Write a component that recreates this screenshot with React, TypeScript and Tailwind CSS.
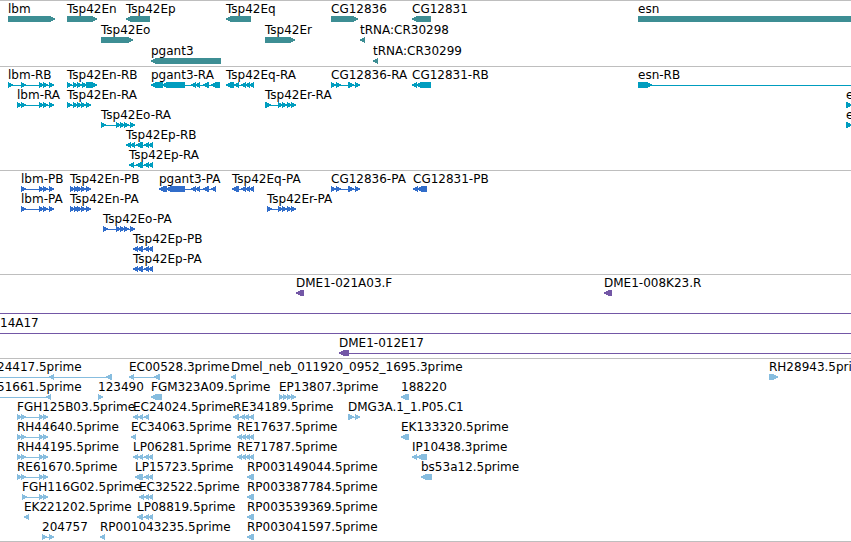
import React from "react";

type Span = [number, number];

type Feature = {
  name?: string;
  strand: "+" | "-";
  spans: Span[];
  // where the label and the connector begin, when not at the first span
  labelAt?: number;
  from?: number;
  to?: number;
};

type TrackData = {
  id: string;
  color: string;
  rowClass: string;
  rows: Feature[][];
};

// features that run on past the right edge of the view
const OFF_RIGHT = 4000;
const HEAD = 5;

const fwd = (name: string, ...spans: Span[]): Feature => ({
  name,
  strand: "+",
  spans,
});
const rev = (name: string, ...spans: Span[]): Feature => ({
  name,
  strand: "-",
  spans,
});

const lbmTail: Span[] = [[39, 44], [43, 48], [49, 54]];
const enTail: Span[] = [[77, 82], [81, 86], [86, 91]];
const eoTail: Span[] = [[116, 121], [120, 125], [124, 129], [130, 135]];
const epTail: Span[] = [[144, 149], [148, 153]];
const eqTail: Span[] = [[241, 246], [245, 250], [249, 254]];
const erTail: Span[] = [[278, 283], [282, 287], [287, 292], [291, 296]];
const pgantTail: Span[] = [[191, 196], [195, 200], [203, 209]];
const cg12836: Span[] = [[331, 336], [336, 341], [348, 354], [355, 360]];
const lbmEst: Span[] = [[17, 22], [21, 26], [39, 44], [43, 48]];
const reEst: Span[] = [[237, 242], [241, 246], [245, 250], [249, 254]];

const tracks: TrackData[] = [
  {
    id: "genes",
    color: "#3d8e94",
    rowClass: "h-[21px]",
    rows: [
      [
        fwd("lbm", [8, 55]),
        fwd("Tsp42En", [67, 97]),
        rev("Tsp42Ep", [126, 150]),
        rev("Tsp42Eq", [226, 251]),
        fwd("CG12836", [331, 358]),
        rev("CG12831", [412, 431]),
        fwd("esn", [638, OFF_RIGHT]),
      ],
      [
        fwd("Tsp42Eo", [101, 133]),
        fwd("Tsp42Er", [265, 295]),
        rev("tRNA:CR30298", [360, 365]),
      ],
      [rev("pgant3", [151, 221]), rev("tRNA:CR30299", [373, 378])],
    ],
  },
  {
    id: "transcripts",
    color: "#009dbf",
    rowClass: "h-5",
    rows: [
      [
        fwd("lbm-RB", [8, 13], [21, 26], ...lbmTail),
        fwd("Tsp42En-RB", [67, 72], [73, 78], [77, 82], [82, 87], [86, 97]),
        rev("pgant3-RA", [151, 163], [162, 185], ...pgantTail, [211, 220]),
        rev("Tsp42Eq-RA", [226, 234], [234, 239], ...eqTail),
        fwd("CG12836-RA", ...cg12836),
        rev("CG12831-RB", [412, 417], [416, 431]),
        { ...fwd("esn-RB", [638, 652]), to: OFF_RIGHT },
      ],
      [
        fwd("lbm-RA", [17, 22], [21, 26], ...lbmTail),
        fwd("Tsp42En-RA", [67, 72], [73, 78], ...enTail),
        fwd("Tsp42Er-RA", [265, 271], ...erTail),
        fwd("esn-RA", [846, 852]),
      ],
      [fwd("Tsp42Eo-RA", [101, 106], ...eoTail), fwd("esn-RC", [846, 852])],
      [rev("Tsp42Ep-RB", [126, 131], [130, 135], [136, 143], ...epTail)],
      [rev("Tsp42Ep-RA", [129, 134], [136, 143], ...epTail)],
    ],
  },
  {
    id: "proteins",
    color: "#316dca",
    rowClass: "h-5",
    rows: [
      [
        fwd("lbm-PB", [21, 26], ...lbmTail),
        fwd("Tsp42En-PB", [70, 75], [74, 79], ...enTail),
        rev("pgant3-PA", [159, 167], [166, 185], ...pgantTail, [211, 216]),
        rev("Tsp42Eq-PA", [232, 239], ...eqTail),
        fwd("CG12836-PA", ...cg12836),
        rev("CG12831-PB", [413, 418], [417, 427]),
      ],
      [
        fwd("lbm-PA", [21, 26], ...lbmTail),
        fwd("Tsp42En-PA", [70, 75], [74, 79], ...enTail),
        fwd("Tsp42Er-PA", [267, 272], ...erTail),
      ],
      [fwd("Tsp42Eo-PA", [103, 108], ...eoTail)],
      [rev("Tsp42Ep-PB", [133, 138], [137, 143], ...epTail)],
      [rev("Tsp42Ep-PA", [133, 138], [137, 143], ...epTail)],
    ],
  },
  {
    id: "clones",
    color: "#7357a6",
    rowClass: "h-5",
    rows: [
      [rev("DME1-021A03.F", [296, 304]), rev("DME1-008K23.R", [604, 612])],
      [{ strand: "-", spans: [], from: 0, to: OFF_RIGHT }],
      [{ name: "14A17", strand: "-", spans: [], from: 0, to: OFF_RIGHT }],
      [{ ...rev("DME1-012E17", [339, 349]), to: OFF_RIGHT }],
    ],
  },
  {
    id: "ests",
    color: "#87bddf",
    rowClass: "h-5",
    rows: [
      [
        { ...rev("24417.5prime", [49, 54], [106, 112]), from: 0, labelAt: -3 },
        rev("EC00528.3prime", [129, 134], [154, 160]),
        rev("Dmel_neb_011920_0952_1695.3prime", [231, 236]),
        fwd("RH28943.5prime", [769, 778]),
      ],
      [
        { ...rev("51661.5prime", [46, 51]), from: 0, labelAt: -3 },
        fwd("123490", [98, 103]),
        rev("FGM323A09.5prime", [151, 162]),
        fwd("EP13807.3prime", [279, 284], [283, 288], [287, 292], [291, 296]),
        rev("188220", [401, 409]),
      ],
      [
        fwd("FGH125B03.5prime", ...lbmEst),
        rev("EC24024.5prime", [133, 138], [138, 143], [144, 149]),
        rev("RE34189.5prime", [233, 239], [240, 245], [244, 249], [249, 254]),
        fwd("DMG3A.1_1.P05.C1", [348, 354], [355, 360]),
      ],
      [
        fwd("RH44640.5prime", ...lbmEst),
        rev("EC34063.5prime", [131, 136]),
        rev("RE17637.5prime", ...reEst),
        rev("EK133320.5prime", [401, 409]),
      ],
      [
        fwd("RH44195.5prime", ...lbmEst),
        rev("LP06281.5prime", [133, 138], [138, 143], ...epTail),
        rev("RE71787.5prime", ...reEst),
        rev("IP10438.3prime", [412, 417], [417, 427]),
      ],
      [
        fwd("RE61670.5prime", ...lbmEst),
        rev("LP15723.5prime", [135, 143], ...epTail),
        rev("RP003149044.5prime", [247, 254]),
        rev("bs53a12.5prime", [421, 432]),
      ],
      [
        fwd("FGH116G02.5prime", [22, 27], [39, 44], [43, 48]),
        rev("EC32522.5prime", [139, 144], ...epTail),
        rev("RP003387784.5prime", [247, 254]),
      ],
      [
        rev("EK221202.5prime", [24, 29]),
        rev("LP08819.5prime", [137, 143], ...epTail),
        rev("RP003539369.5prime", [247, 254]),
      ],
      [
        fwd("204757", [42, 47], [49, 54]),
        rev("RP001043235.5prime", [100, 105]),
        rev("RP003041597.5prime", [247, 254]),
      ],
    ],
  },
];

// box with a pointed end in the direction of the strand
const arrowPath = ([start, end]: Span, strand: "+" | "-") => {
  const head = Math.min(HEAD, end - start) - 1;
  const [tail, tip, dir] = strand === "+" ? [start, end, 1] : [end, start, -1];
  const neck = tip - dir * head;
  const mid = tip - dir * 2;
  return `M${tail} 0H${neck}V1H${mid}V2H${tip}V4H${mid}V5H${neck}V6H${tail}Z`;
};

const FeatureItem = ({ feature, color }: { feature: Feature; color: string }) => {
  const { name, strand, spans } = feature;
  const start = feature.from ?? spans[0][0];
  const end = feature.to ?? spans[spans.length - 1][1];
  return (
    <>
      {name ? (
        <span
          className="absolute bottom-1.5 whitespace-nowrap leading-[14px]"
          style={{ left: feature.labelAt ?? start }}
        >
          {name}
        </span>
      ) : null}
      <svg
        className="absolute bottom-0 h-1.5"
        style={{ left: start, width: end - start }}
        viewBox={`${start} 0 ${end - start} 6`}
        shapeRendering="crispEdges"
        fill={color}
        aria-hidden="true"
      >
        {spans.length !== 1 || end > spans[0][1] || start < spans[0][0] ? (
          <rect x={start} y={3} width={end - start} height={1} />
        ) : null}
        {spans.map((span) => (
          <path key={span[0]} d={arrowPath(span, strand)} />
        ))}
      </svg>
    </>
  );
};

const Track = ({ track }: { track: TrackData }) => (
  <section className="flex flex-col justify-end border-t border-[#bebebe] pb-0.5 last:border-b last:pb-px">
    {track.rowClass === "h-5" ? <div className="h-px" /> : null}
    {track.rows.map((row, i) => (
      <div key={i} className={`relative ${track.rowClass}`}>
        {row.map((feature, j) => (
          <FeatureItem key={j} feature={feature} color={track.color} />
        ))}
      </div>
    ))}
  </section>
);

export default function App() {
  return (
    <main className="w-full overflow-hidden bg-white font-['DejaVu_Sans',sans-serif] text-[12px] text-black">
      {tracks.map((track) => (
        <Track key={track.id} track={track} />
      ))}
    </main>
  );
}
